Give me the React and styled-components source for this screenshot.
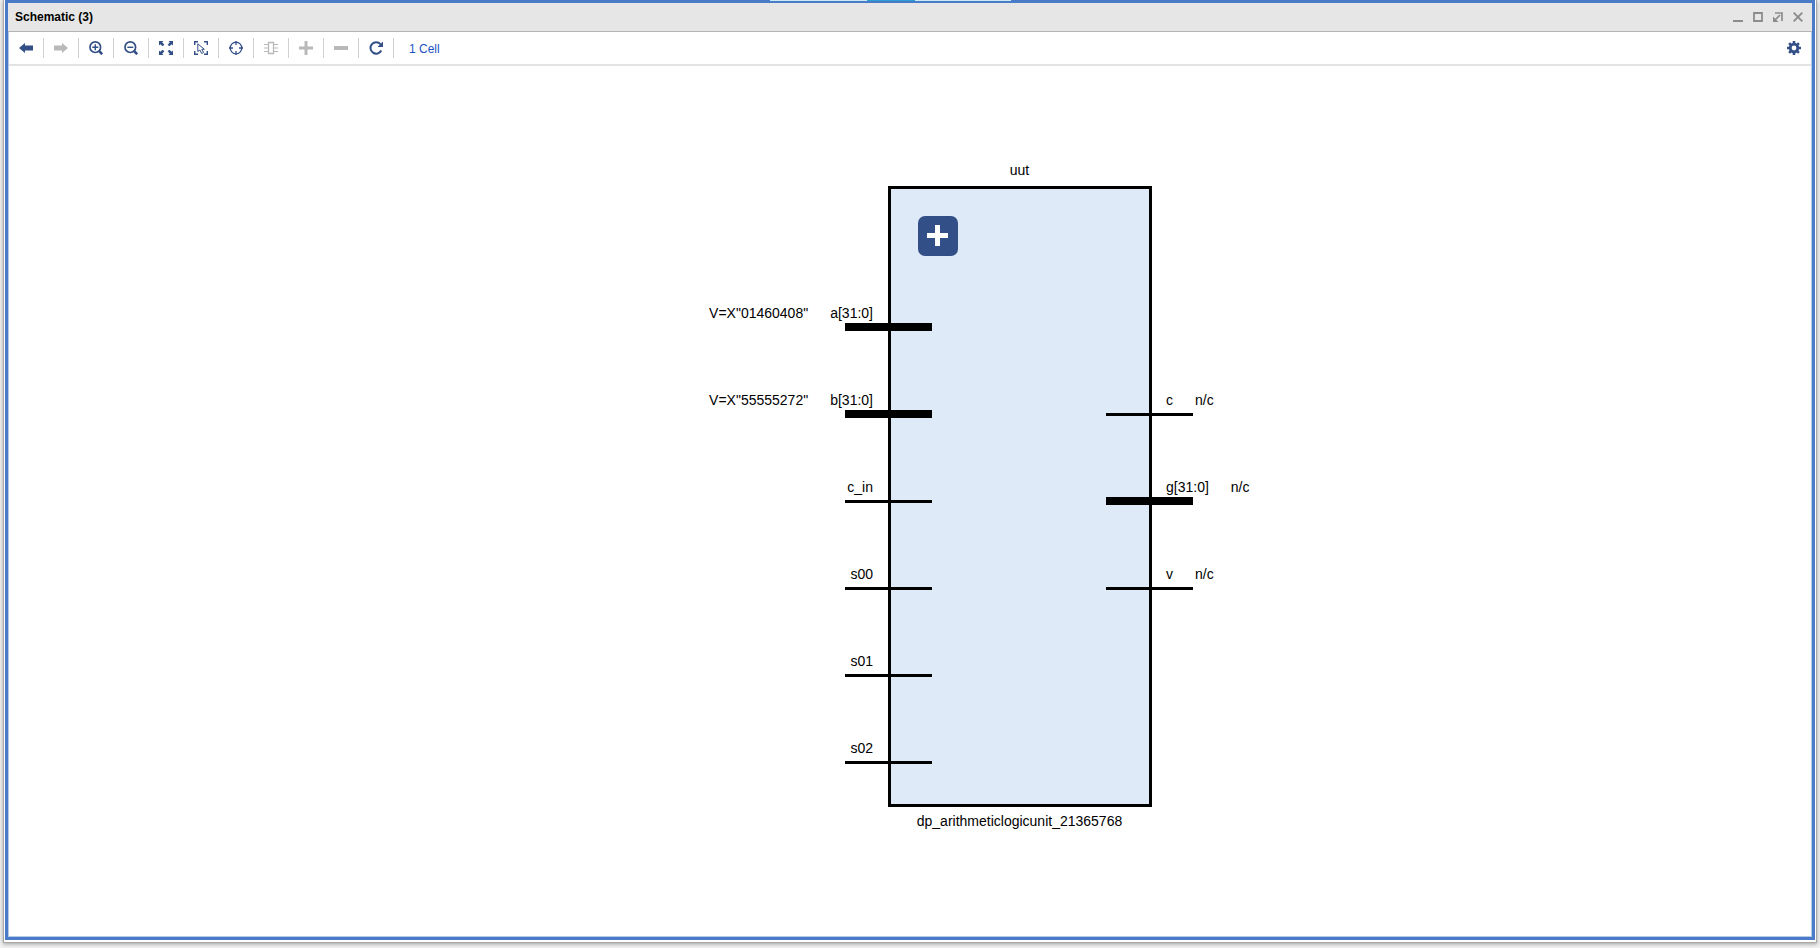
import React from "react";
import styled, { createGlobalStyle } from "styled-components";

const GlobalStyle = createGlobalStyle`
  *, *::before, *::after { box-sizing: border-box; }
  body {
    margin: 0;
    background: #fff;
    color: #000;
    font-family: "Liberation Sans", Arial, sans-serif;
    font-size: 12px;
  }
  button { font: inherit; color: inherit; }
`;

const NAVY = "#334f87";
const MUTED = "#b9b9b9";

const Page = styled.div`
  position: relative;
  display: flex;
  min-height: 100vh;
  padding: 0 3px 5px;
  background: #f1f1f1;
`;

const TabStrip = styled.div`
  position: absolute;
  top: 0;
  left: calc(50% - 140px);
  display: flex;
  width: 241px;
  height: 1px;
  background: #c9e9f5;
  justify-content: center;
`;

const ActiveTab = styled.span`
  width: 48px;
  background: #27a0cf;
`;

const Frame = styled.div`
  flex: 1;
  display: flex;
  padding: 0 1px 2px;
  border: 1px solid #a9aaa6;
  border-top: 0;
  background: #fff;
  box-shadow: 0 1px 4px rgba(0, 0, 0, 0.35);
`;

const Panel = styled.section`
  flex: 1;
  display: flex;
  flex-direction: column;
  border: 3px solid #4a7bc8;
`;

const TitleBar = styled.header`
  display: flex;
  align-items: center;
  justify-content: space-between;
  height: 29px;
  padding: 0 4px 0 7px;
  background: #e6e6e6;
  border-bottom: 1px solid #b4b4b4;
`;

const Title = styled.h1`
  margin: 0;
  font-size: 12px;
  line-height: 28px;
`;

const WindowControls = styled.div`
  display: flex;
`;

const WindowButton = styled.button`
  display: grid;
  place-items: center;
  width: 20px;
  height: 20px;
  padding: 0;
  border: 0;
  background: none;
  color: #8c8c8c;
`;

const Content = styled.div`
  flex: 1;
  display: flex;
  flex-direction: column;
  border: 1px solid #b7c9e8;
  border-top: 0;
`;

const Toolbar = styled.div`
  display: flex;
  align-items: center;
  height: 34px;
  border-bottom: 2px solid #e3e3e3;
`;

const ToolButton = styled.button`
  display: grid;
  place-items: center;
  width: 35px;
  height: 20px;
  padding: 0;
  border: 0;
  border-right: 1px solid #d0d0d0;
  background: none;
  color: ${(p) => (p.disabled ? MUTED : NAVY)};
`;

const CellLink = styled.a`
  margin-left: 15px;
  padding-top: 2px;
  color: #1c4fc4;
  line-height: 16px;
  text-decoration: none;
`;

const SettingsButton = styled(ToolButton)`
  margin-left: auto;
  border-right: 0;
`;

const Canvas = styled.main`
  flex: 1;
  display: flex;
  flex-direction: column;
  align-items: stretch;
  padding: 96px 0 40px 219px;
  font-size: 14px;
  line-height: 16px;
`;

const Caption = styled.div`
  text-align: center;
  padding: 0 0 8px;
`;

const Footnote = styled(Caption)`
  padding: 6px 0 0;
`;

const Cell = styled.div`
  display: flex;
`;

const Body = styled.div`
  width: 264px;
  height: 621px;
  padding: 27px;
  border: 3px solid #000;
  background: #dfeaf8;
`;

const ExpandButton = styled.button`
  display: grid;
  place-items: center;
  width: 40px;
  height: 40px;
  padding: 0 1px 1px 0;
  border: 0;
  border-radius: 7px;
  background: ${NAVY};
  color: #fff;
`;

const Ports = styled.ul`
  flex: 1 1 0;
  margin: 0;
  padding: ${(p) => (p.$side === "in" ? "54px 15px 0 0" : "141px 0 0 14px")};
  list-style: none;
`;

const Port = styled.li`
  position: relative;
  display: flex;
  gap: 22px;
  height: 87px;
  padding-bottom: 6px;
  align-items: flex-end;
  justify-content: ${(p) => (p.$side === "in" ? "flex-end" : "flex-start")};
  white-space: nowrap;

  &::after {
    content: "";
    position: absolute;
    ${(p) => (p.$side === "in" ? "right: -59px;" : "left: -60px;")}
    bottom: ${(p) => (p.$bus ? "-4px" : "-2px")};
    width: 87px;
    height: ${(p) => (p.$bus ? "8px" : "3px")};
    background: #000;
  }
`;

const Svg = ({ size = 14, children }) => (
  <svg width={size} height={size} viewBox={`0 0 ${size} ${size}`} fill="none" stroke="currentColor" aria-hidden="true">
    {children}
  </svg>
);

const Arrow = ({ flip }) => (
  <Svg>
    <path
      d="M0 7 6 2v2.500H14v5H6V12Z"
      fill="currentColor"
      stroke="none"
      transform={flip ? "translate(14 0) scale(-1 1)" : undefined}
    />
  </Svg>
);

const Magnifier = ({ plus }) => (
  <Svg>
    <circle cx="6.3" cy="6.2" r="5.3" strokeWidth="1.7" />
    <path d="m10.2 10.2 3 3" strokeWidth="2.6" />
    <path d={plus ? "M3.3 6.3h6M6.3 3.3v6" : "M3.3 6.3h6"} strokeWidth="1.4" />
  </Svg>
);

const FitIcon = () => (
  <Svg>
    <path
      d="M0 0h4.500L3.200 1.300 5.300 3.700 3.700 5.300 1.300 3.200 0 4.500ZM14 0v4.500l-1.300-1.300-2.400 2.100-1.600-1.600 2.100-2.400L9.500 0ZM0 14V9.500l1.300 1.300 2.400-2.100 1.600 1.600-2.100 2.400L4.500 14ZM14 14H9.500l1.300-1.300-2.100-2.400 1.600-1.600 2.400 2.100L14 9.500Z"
      fill="currentColor"
      stroke="none"
    />
  </Svg>
);

const SelectIcon = () => (
  <Svg>
    <path d="M.7 4V.7H4M10 .7h3.300V4M13.300 10v3.300H10M4 13.300H.7V10" strokeWidth="1.4" />
    <path d="M3.800 2.800v7.700L5.900 9l1.800 3.500 1.900-1-1.800-3.200h2.600Z" strokeWidth="1" />
  </Svg>
);

const TargetIcon = () => (
  <Svg>
    <circle cx="7" cy="7" r="5.8" strokeWidth="1.3" />
    <path d="M7 0v4M7 10v4M0 7h4M10 7h4" strokeWidth="1.3" />
  </Svg>
);

const ChipIcon = () => (
  <Svg>
    <path d="M4.500 1.500h5v11h-5Z" strokeWidth="1.3" />
    <path d="M0 3.500h4M0 7h4M0 10.500h4M10 3.500h4M10 7h4M10 10.500h4" strokeWidth="1.2" />
  </Svg>
);

const PlusIcon = () => (
  <Svg>
    <path d="M7 0v14M0 7h14" strokeWidth="3" />
  </Svg>
);

const MinusIcon = () => (
  <Svg>
    <path d="M0 7h14" strokeWidth="4" />
  </Svg>
);

const RefreshIcon = () => (
  <Svg>
    <path d="M11.500 3.200A5.700 5.700 0 1 0 12.300 9.500" strokeWidth="2" />
    <path d="M14 .5V6H8.500Z" fill="currentColor" stroke="none" />
  </Svg>
);

const GearIcon = () => (
  <Svg>
    <circle cx="7" cy="7" r="3.8" strokeWidth="2.8" />
    <path
      d="M7 0v2.500M7 11.500V14M0 7h2.500M11.500 7H14M2.100 2.100l1.700 1.700M10.200 10.200l1.700 1.700M2.100 11.900l1.700-1.700M10.200 3.800l1.700-1.700"
      strokeWidth="2.6"
    />
  </Svg>
);

const TOOLS = [
  { label: "Previous", icon: <Arrow /> },
  { label: "Next", icon: <Arrow flip />, disabled: true },
  { label: "Zoom in", icon: <Magnifier plus /> },
  { label: "Zoom out", icon: <Magnifier /> },
  { label: "Zoom fit", icon: <FitIcon /> },
  { label: "Select area", icon: <SelectIcon /> },
  { label: "Autofit selection", icon: <TargetIcon /> },
  { label: "Expand cell", icon: <ChipIcon />, disabled: true },
  { label: "Add", icon: <PlusIcon />, disabled: true },
  { label: "Remove", icon: <MinusIcon />, disabled: true },
  { label: "Regenerate", icon: <RefreshIcon /> },
];

const CONTROLS = [
  { label: "Minimize", icon: <path d="M0 9h10" strokeWidth="2" /> },
  { label: "Maximize", icon: <path d="M1 1h8v8H1Z" strokeWidth="1.8" /> },
  {
    label: "Float",
    icon: (
      <>
        <path d="M2 1h7v8M7 3 2 8" strokeWidth="1.7" />
        <path d="M0 4.500V10h5.500Z" fill="currentColor" stroke="none" />
      </>
    ),
  },
  { label: "Close", icon: <path d="m.7.7 8.600 8.600M9.300.7.7 9.300" strokeWidth="1.9" /> },
];

const INPUTS = [
  { name: "a[31:0]", value: 'V=X"01460408"', bus: true },
  { name: "b[31:0]", value: 'V=X"55555272"', bus: true },
  { name: "c_in" },
  { name: "s00" },
  { name: "s01" },
  { name: "s02" },
];

const OUTPUTS = [
  { name: "c", value: "n/c" },
  { name: "g[31:0]", value: "n/c", bus: true },
  { name: "v", value: "n/c" },
];

export default function App() {
  return (
    <>
      <GlobalStyle />
      <Page>
        <Frame>
          <Panel>
            <TitleBar>
              <Title>Schematic (3)</Title>
              <WindowControls>
                {CONTROLS.map((c) => (
                  <WindowButton key={c.label} aria-label={c.label}>
                    <Svg size={10}>{c.icon}</Svg>
                  </WindowButton>
                ))}
              </WindowControls>
            </TitleBar>
            <Content>
              <Toolbar>
                {TOOLS.map((t) => (
                  <ToolButton key={t.label} aria-label={t.label} disabled={t.disabled}>
                    {t.icon}
                  </ToolButton>
                ))}
                <CellLink href="#cells">1 Cell</CellLink>
                <SettingsButton aria-label="Settings">
                  <GearIcon />
                </SettingsButton>
              </Toolbar>
              <Canvas>
                <Caption>uut</Caption>
                <Cell>
                  <Ports $side="in">
                    {INPUTS.map((p) => (
                      <Port key={p.name} $side="in" $bus={p.bus}>
                        {p.value && <span>{p.value}</span>}
                        <span>{p.name}</span>
                      </Port>
                    ))}
                  </Ports>
                  <Body>
                    <ExpandButton aria-label="Expand uut">
                      <svg width="21" height="21" viewBox="0 0 21 21" aria-hidden="true">
                        <path d="M8 0h5v8h8v5h-8v8H8v-8H0V8h8Z" fill="currentColor" />
                      </svg>
                    </ExpandButton>
                  </Body>
                  <Ports $side="out">
                    {OUTPUTS.map((p) => (
                      <Port key={p.name} $side="out" $bus={p.bus}>
                        <span>{p.name}</span>
                        <span>{p.value}</span>
                      </Port>
                    ))}
                  </Ports>
                </Cell>
                <Footnote>dp_arithmeticlogicunit_21365768</Footnote>
              </Canvas>
            </Content>
          </Panel>
        </Frame>
        <TabStrip>
          <ActiveTab />
        </TabStrip>
      </Page>
    </>
  );
}
